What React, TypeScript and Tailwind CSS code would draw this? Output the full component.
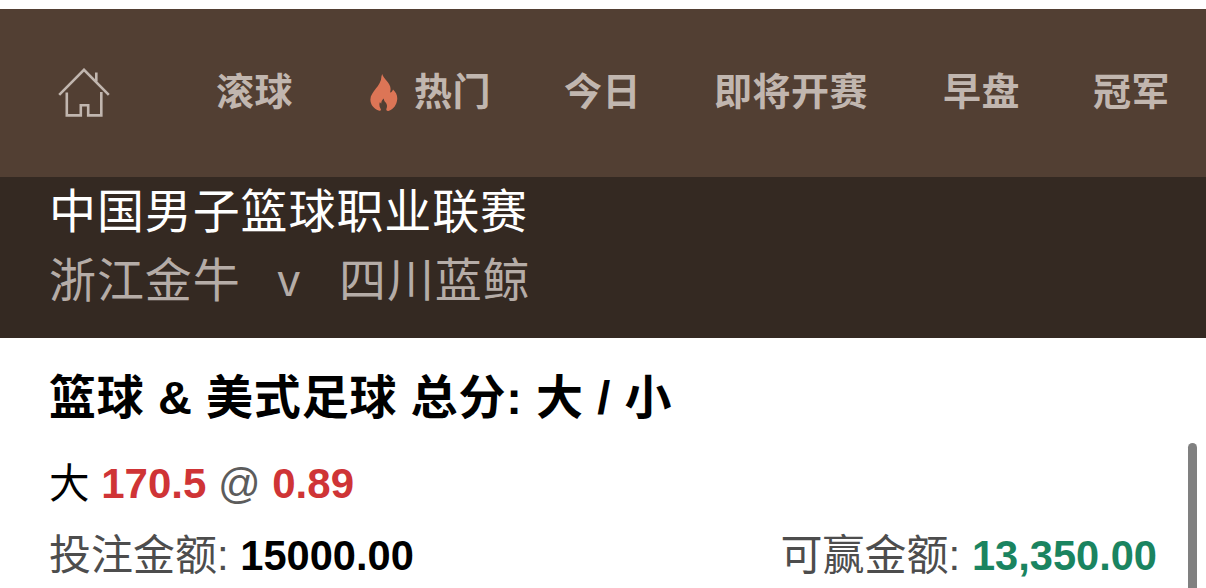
function HomeIcon() {
  return (
    <svg viewBox="0 0 52 50" className="w-[52px] h-[50px] mt-[2px]" fill="none" stroke="currentColor" strokeWidth="2.6">
      <path d="M1.2 26.8 L26 1.8 L50.8 26.8" />
      <path d="M38.3 4.5 V13.5" />
      <path d="M8.8 24.5 V47.4 H22.8 V37.2 H30.2 V47.4 H43.3 V24" />
    </svg>
  )
}

function FlameIcon() {
  return (
    <svg viewBox="0 0 28 37" className="w-[28px] h-[37px]" fill="currentColor">
      <path d="M12.2 0 C13.3 4.5 20.6 9 20.6 15 C20.6 16.6 20.3 17.6 20 18.6 C21.6 18 22.6 17 23 15.4 C26 18 27.6 21.5 27.2 25.5 C26.7 30.5 23.8 35.2 19 36.7 C17 37.3 15.8 36.4 16.5 34.6 C17.6 31.8 16.8 29.6 15.4 28.2 C14.4 27.2 13.9 26 13.9 24.4 C11.8 25.8 11.1 27.8 11.3 29.6 C10.6 29.3 10.2 28.8 10 28.1 C9 30.3 9.2 32.4 10.6 34.8 C11.6 36.6 10.2 37.2 8.6 36.5 C3.6 34.6 .6 31 .4 25.8 C0 18 11.6 12 11.4 2.6 Z" />
    </svg>
  )
}

const tabs = [
  { label: '即将开赛', className: 'ml-[73px]' },
  { label: '早盘', className: 'ml-[75px]' },
  { label: '冠军', className: 'ml-[73px]' },
]

export default function App() {
  return (
    <div className="relative w-[1206px] h-[588px] overflow-hidden bg-white pt-[9px] font-['Liberation_Sans','Noto_Sans_CJK_SC',sans-serif]">
      {/* Top navigation */}
      <nav className="flex items-center h-[168px] pl-[58px] pb-[2px] bg-[#523f33] text-[#c1b6af] text-[38px] leading-[56px] tracking-[0.5px] font-bold whitespace-nowrap">
        <HomeIcon />
        <span className="ml-[106px]">滚球</span>
        <span className="ml-[77px] text-[#dc7556]">
          <FlameIcon />
        </span>
        <span className="ml-[16px]">热门</span>
        <span className="ml-[73px]">今日</span>
        {tabs.map((tab) => (
          <span key={tab.label} className={tab.className}>{tab.label}</span>
        ))}
      </nav>

      {/* Match info */}
      <header className="h-[161px] bg-[#342922] pl-[49px] text-[47px] tracking-[0.9px] whitespace-nowrap">
        <h1 className="h-[69px] leading-[69px] text-white">中国男子篮球职业联赛</h1>
        <div className="flex h-[70px] leading-[70px] text-[#b5aca7]">
          <span>浙江金牛</span>
          <span className="ml-[37px] text-[45px]">v</span>
          <span className="ml-[38px]">四川蓝鲸</span>
        </div>
      </header>

      {/* Bet details */}
      <main className="px-[49px] pt-[25px] whitespace-nowrap">
        <h2 className="h-[69px] leading-[69px] text-[47px] font-bold text-black tracking-[0.8px] [word-spacing:-0.5px]">
          篮球 &amp; 美式足球 总分: 大 / 小
        </h2>
        <div className="h-[72px] mt-[16px] leading-[72px] text-[42px] font-bold text-[#cf3436]">
          <span className="font-normal text-black text-[40.5px]">大</span> 170.5{' '}
          <span className="font-normal text-[#5c5c5c]">@</span> 0.89
        </div>
        <div className="flex justify-between h-[72px] leading-[72px] text-[42px] text-[#4d4d4d]">
          <div>
            投注金额: <b className="text-black text-[41.6px]">15000.00</b>
          </div>
          <div>
            可赢金额: <b className="text-[#1a8460] text-[41.6px]">13,350.00</b>
          </div>
        </div>
      </main>

      {/* Scroll thumb */}
      <div className="absolute right-[9px] top-[443px] w-[9px] h-[180px] rounded-full bg-[#808080]" />
    </div>
  )
}
